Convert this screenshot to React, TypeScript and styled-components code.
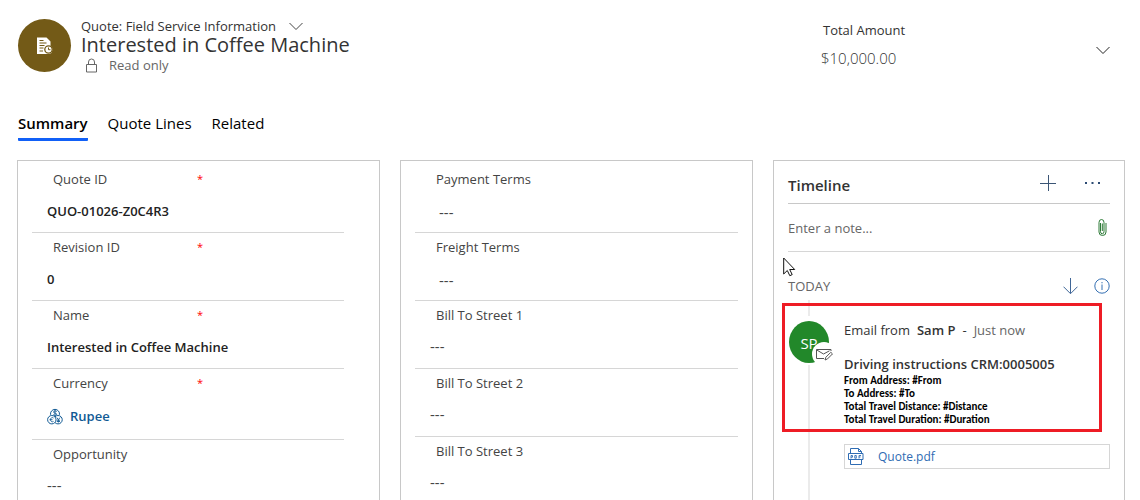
import React from 'react';
import styled, { createGlobalStyle } from 'styled-components';

const GlobalStyle = createGlobalStyle`
  * { box-sizing: border-box; }
  body {
    margin: 0;
    background: #fff;
    color: #333;
    font-family: 'Segoe UI', 'Open Sans', 'Noto Sans', sans-serif;
    font-size: 13px;
    line-height: 20px;
  }
  button, input { font: inherit; color: inherit; }
  h1, h2, h3, p, dl, dt, dd { margin: 0; font-weight: 400; }
  svg { display: block; flex: none; }
`;

const Page = styled.div`
  height: 100vh;
  overflow-y: auto;
  scrollbar-width: none;
  padding: 19px 15px 16px 17px;
`;

const Header = styled.header`
  display: flex;
  align-items: flex-start;
  height: 92px;
  padding: 0 15px 0 1px;
`;

const RecordBadge = styled.div`
  display: flex;
  align-items: center;
  justify-content: center;
  flex: none;
  width: 53px;
  height: 53px;
  border-radius: 50%;
  background: #735a17;
`;

const RecordInfo = styled.div`
  flex: 1;
  margin-left: 10px;
`;

const FormName = styled.div`
  display: flex;
  align-items: center;
  gap: 13px;
  line-height: 14px;
  white-space: nowrap;
`;

const RecordTitle = styled.h1`
  font-size: 20px;
  line-height: 24px;
  white-space: nowrap;
`;

const ReadOnly = styled.div`
  display: flex;
  align-items: center;
  gap: 12px;
  padding-left: 5px;
  line-height: 16px;
  color: #666;
`;

const IconButton = styled.button`
  display: flex;
  padding: 0;
  border: 0;
  background: none;
  cursor: pointer;
`;

const Total = styled.dl`
  width: 275px;
  dt { padding: 1px 0 0 2px; }
  dd { font-size: 15px; font-weight: 300; line-height: 20px; margin-top: 8px; }
`;

const HeaderToggle = styled(IconButton)`
  margin-top: 27px;
`;

const Tabs = styled.nav`
  display: flex;
  gap: 20px;
  padding-left: 1px;
  margin-bottom: 19px;
`;

const Tab = styled.button<{ $active?: boolean }>`
  padding: 0 0 3px;
  border: 0;
  border-bottom: 3px solid ${p => (p.$active ? '#1160f7' : 'transparent')};
  border-radius: 1px;
  background: none;
  color: #000;
  font-size: 15px;
  font-weight: ${p => (p.$active ? 600 : 400)};
  line-height: 24px;
  cursor: pointer;
`;

const Columns = styled.main`
  display: grid;
  grid-template-columns: 363fr 353fr 352fr;
  gap: 20px;
`;

const Panel = styled.section<{ $right?: number }>`
  position: relative;
  min-width: 0;
  padding: 0 ${p => p.$right ?? 14}px 0 14px;
  border: 1px solid #c8c8c8;
`;

const Fields = styled.dl`
  padding-top: 4px;
`;

const FieldRow = styled.div`
  padding: 4px 0 11px 15px;
  border-bottom: 1px solid #d6d6d6;
`;

const FieldLabel = styled.dt`
  display: flex;
  padding-left: 6px;
  color: #444;
  span { width: 144px; }
  em { color: #f00; font-size: 11px; font-style: normal; }
`;

const FieldValue = styled.dd`
  margin-top: 12px;
  font-weight: 600;
  color: #222;
`;

const EmptyValue = styled.dd<{ $inset?: boolean }>`
  height: 20px;
  margin-top: 12px;
  padding: ${p => (p.$inset ? '2px 0 0 9px' : '0')};
  color: #444;
  font-size: 15px;
  line-height: 18px;
`;

const LookupLink = styled.a`
  display: flex;
  align-items: center;
  gap: 7px;
  height: 23px;
  padding-bottom: 2px;
  color: #115a94;
  text-decoration: none;
  svg { margin-top: 2px; }
`;

const TimelineHeader = styled.header`
  display: flex;
  align-items: center;
  height: 43px;
  padding: 6px 10px 0 0;
  border-bottom: 1px solid #c8c8c8;
  h2 { flex: 1; font-size: 15px; font-weight: 600; }
`;

const TimelineActions = styled.div`
  display: flex;
  gap: 29px;
  padding-bottom: 4px;
`;

const NoteBar = styled.div`
  display: flex;
  align-items: center;
  height: 48px;
  padding-right: 3px;
  border-bottom: 1px solid #d6d6d6;
`;

const NoteInput = styled.input`
  flex: 1;
  min-width: 0;
  padding: 0;
  border: 0;
  outline: 0;
  background: none;
  &::placeholder { color: #666; opacity: 1; }
`;

const DayBar = styled.div`
  display: flex;
  align-items: center;
  gap: 16px;
  height: 48px;
  padding-top: 20px;
  color: #666;
  h3 { flex: 1; font-size: 13px; }
`;

const Entry = styled.article`
  position: relative;
  display: flex;
  gap: 14px;
  height: 220px;
`;

const Highlight = styled.div`
  position: absolute;
  top: 3px;
  left: -6px;
  right: 8px;
  height: 129px;
  border: 3px solid #ee1c25;
  pointer-events: none;
`;

const Rail = styled.div`
  display: flex;
  flex-direction: column;
  align-items: center;
  width: 42px;
  &::before { content: ''; width: 2px; height: 16px; margin-bottom: 5px; background: #ebebeb; }
  &::after { content: ''; width: 2px; flex: 1; margin-top: 2px; background: #ebebeb; }
`;

const Avatar = styled.div`
  position: relative;
  width: 40px;
  height: 42px;
  border-radius: 50%;
  background: #22882a;
  color: #fff;
  font-size: 15px;
  line-height: 44px;
  text-align: center;
`;

const AvatarBadge = styled.span`
  position: absolute;
  right: -7px;
  bottom: -3px;
  display: flex;
  align-items: center;
  justify-content: center;
  width: 24px;
  height: 24px;
  border-radius: 50%;
  background: #fff;
`;

const EntryBody = styled.div`
  flex: 1;
  min-width: 0;
  padding-top: 20px;
`;

const EntryMeta = styled.p`
  display: flex;
  gap: 7px;
  b { font-weight: 600; }
  time { color: #666; }
`;

const Subject = styled.h3`
  margin-top: 14px;
  font-size: 13px;
  font-weight: 600;
`;

const Message = styled.p`
  color: #000;
  font-family: Calibri, Lato, sans-serif;
  font-size: 11px;
  font-weight: 700;
  line-height: 13px;
`;

const Attachment = styled.a`
  display: flex;
  align-items: center;
  gap: 14px;
  height: 25px;
  margin-top: 18px;
  padding-left: 3px;
  border: 1px solid #d6d6d6;
  color: #2f6cb3;
  font-size: 12px;
  text-decoration: none;
`;

const Cursor = styled.svg`
  position: absolute;
  top: 96px;
  left: 9px;
`;

const Chevron = ({ color = '#444' }: { color?: string }) => (
  <svg width="14" height="9" viewBox="0 0 14 9" fill="none" stroke={color}>
    <path d="M.5 1 7 7.5 13.500 1" />
  </svg>
);

const QuoteIcon = () => (
  <svg width="18" height="18" viewBox="0 0 18 18">
    <path d="M1 .5h9.500l4 4V9a4.500 4.500 0 0 1-1 8H1z" fill="#fff" />
    <path d="M3.500 3.500h4M3.500 6h7M3.500 8.500h5M3.500 11h4M3.500 14h3.500" stroke="#735a17" strokeWidth="1.200" />
    <circle cx="12.500" cy="12.500" r="3.700" fill="#fff" stroke="#735a17" strokeWidth="1.300" />
    <path d="M12.500 10.500v2.200h2" fill="none" stroke="#735a17" />
  </svg>
);

const LockIcon = () => (
  <svg width="11" height="15" viewBox="0 0 11 15" fill="none" stroke="#666">
    <path d="M.5 6.500h10v7.500H.5zM2.500 6.500V4a3 3 0 0 1 6 0v2.500" />
  </svg>
);

const CurrencyIcon = () => (
  <svg width="16" height="17" viewBox="0 0 16 17" fill="none" stroke="#115a94">
    <path d="M3.600 6.800A4.500 4.500 0 1 1 12.400 6.800" />
    <circle cx="4.800" cy="11.700" r="4.200" />
    <path d="M8 8.800a4.200 4.200 0 1 1 0 5.800" />
    <path d="M9.800 3.500C9 2.600 6.400 2.700 6.500 4.100s3.300.8 3.200 2.200S7 7.600 6.200 6.700M8 1.800v6.700M6.500 10c-1.500-1-3 0-3 1.700s1.500 2.700 3 1.700M2.500 11.700H5.500M9.800 9.500l1.600 2.200L13 9.500M11.400 11.700v2.800M9.800 12.200h3.200M9.800 13.500h3.200" strokeWidth=".9" />
  </svg>
);

const PlusIcon = () => (
  <svg width="16" height="16" viewBox="0 0 16 16" stroke="#3b5575">
    <path d="M8.500 0v16M0 8.500h16" />
  </svg>
);

const MoreIcon = () => (
  <svg width="15" height="16" viewBox="0 0 15 16" fill="#2b4a73">
    <path d="M0 7h2v2H0zM6.500 7h2v2h-2zM13 7h2v2h-2z" />
  </svg>
);

const ClipIcon = () => (
  <svg width="9" height="17" viewBox="0 0 9 17" fill="none" stroke="#2c7a36">
    <path d="M2.500 4v8.500a1.500 2 0 0 0 3.500 0V3.500a2.500 3 0 0 0-5 0V13a3.500 3.500 0 0 0 7 0V4M4.300 4.500V12" />
  </svg>
);

const ArrowIcon = () => (
  <svg width="15" height="17" viewBox="0 0 15 17" fill="none" stroke="#3f6697">
    <path d="M7.500 0v15.500M.5 8.700l7 7 7-7" />
  </svg>
);

const InfoIcon = () => (
  <svg width="16" height="16" viewBox="0 0 16 16" fill="none" stroke="#3570b3">
    <circle cx="8" cy="8" r="7.200" />
    <path d="M8 6.500V12M8 4v1.300" />
  </svg>
);

const MailIcon = () => (
  <svg width="17" height="13" viewBox="0 0 17 13" fill="none" stroke="#555">
    <path d="M8 10.500H.5v-9H15V3M.8 2l6.700 4 6-3.200" />
    <path d="m9 12 .8-2.700 5-5 1.700 1.600-5 5z" />
  </svg>
);

const PdfIcon = () => (
  <svg width="16" height="17" viewBox="0 0 16 17" fill="none" stroke="#2f6cb3">
    <path d="M2.500 5V.5h8l3 3V5M10.500.5v3h3M2.500 12v4.500h11V12" />
    <path d="M.5 5.500h14.500v6H.5z" />
    <path d="M3 10.500v-3h1.500v1.700H3M6.800 7.500v2.700h1.500V7.500zM11 10.500v-3h2M11 9h1.500" strokeWidth=".9" />
  </svg>
);

const Pointer = () => (
  <Cursor width="13" height="20" viewBox="0 0 13 20" fill="#fff" stroke="#111">
    <path d="M.7 1v16l3.600-3.500 2.500 5.200 2.400-1.100-2.500-5.100h5z" />
  </Cursor>
);

type FieldData = { label: string; value?: React.ReactNode; required?: boolean; inset?: boolean };

const quoteFields: FieldData[] = [
  { label: 'Quote ID', value: 'QUO-01026-Z0C4R3', required: true },
  { label: 'Revision ID', value: '0', required: true },
  { label: 'Name', value: 'Interested in Coffee Machine', required: true },
  {
    label: 'Currency',
    required: true,
    value: (
      <LookupLink href="#currency">
        <CurrencyIcon />
        Rupee
      </LookupLink>
    ),
  },
  { label: 'Opportunity' },
];

const billingFields: FieldData[] = [
  { label: 'Payment Terms', inset: true },
  { label: 'Freight Terms', inset: true },
  { label: 'Bill To Street 1' },
  { label: 'Bill To Street 2' },
  { label: 'Bill To Street 3' },
];

const FieldList = ({ fields }: { fields: FieldData[] }) => (
  <Fields>
    {fields.map(f => (
      <FieldRow key={f.label}>
        <FieldLabel>
          <span>{f.label}</span>
          {f.required && <em>*</em>}
        </FieldLabel>
        {f.value ? <FieldValue>{f.value}</FieldValue> : <EmptyValue $inset={f.inset}>---</EmptyValue>}
      </FieldRow>
    ))}
  </Fields>
);

export default function App() {
  return (
    <>
      <GlobalStyle />
      <Page>
        <Header>
          <RecordBadge><QuoteIcon /></RecordBadge>
          <RecordInfo>
            <FormName>
              Quote: Field Service Information
              <IconButton aria-label="Switch form"><Chevron /></IconButton>
            </FormName>
            <RecordTitle>Interested in Coffee Machine</RecordTitle>
            <ReadOnly><LockIcon />Read only</ReadOnly>
          </RecordInfo>
          <Total>
            <dt>Total Amount</dt>
            <dd>$10,000.00</dd>
          </Total>
          <HeaderToggle aria-label="Expand header"><Chevron color="#222" /></HeaderToggle>
        </Header>

        <Tabs>
          <Tab $active>Summary</Tab>
          <Tab>Quote Lines</Tab>
          <Tab>Related</Tab>
        </Tabs>

        <Columns>
          <Panel $right={35}><FieldList fields={quoteFields} /></Panel>
          <Panel><FieldList fields={billingFields} /></Panel>
          <Panel>
            <TimelineHeader>
              <h2>Timeline</h2>
              <TimelineActions>
                <IconButton aria-label="Add record"><PlusIcon /></IconButton>
                <IconButton aria-label="More commands"><MoreIcon /></IconButton>
              </TimelineActions>
            </TimelineHeader>
            <NoteBar>
              <NoteInput aria-label="Note" placeholder="Enter a note..." />
              <IconButton aria-label="Attach file"><ClipIcon /></IconButton>
            </NoteBar>
            <DayBar>
              <h3>TODAY</h3>
              <IconButton aria-label="Sort"><ArrowIcon /></IconButton>
              <IconButton aria-label="Information"><InfoIcon /></IconButton>
            </DayBar>
            <Entry>
              <Rail>
                <Avatar>
                  SP
                  <AvatarBadge><MailIcon /></AvatarBadge>
                </Avatar>
              </Rail>
              <EntryBody>
                <EntryMeta>
                  <span>Email from</span>
                  <b>Sam P</b>
                  <span>-</span>
                  <time>Just now</time>
                </EntryMeta>
                <Subject>Driving instructions CRM:0005005</Subject>
                <Message>
                  From Address: #From<br />
                  To Address: #To<br />
                  Total Travel Distance: #Distance<br />
                  Total Travel Duration: #Duration
                </Message>
                <Attachment href="#quote-pdf"><PdfIcon />Quote.pdf</Attachment>
              </EntryBody>
              <Highlight />
            </Entry>
            <Pointer />
          </Panel>
        </Columns>
      </Page>
    </>
  );
}
